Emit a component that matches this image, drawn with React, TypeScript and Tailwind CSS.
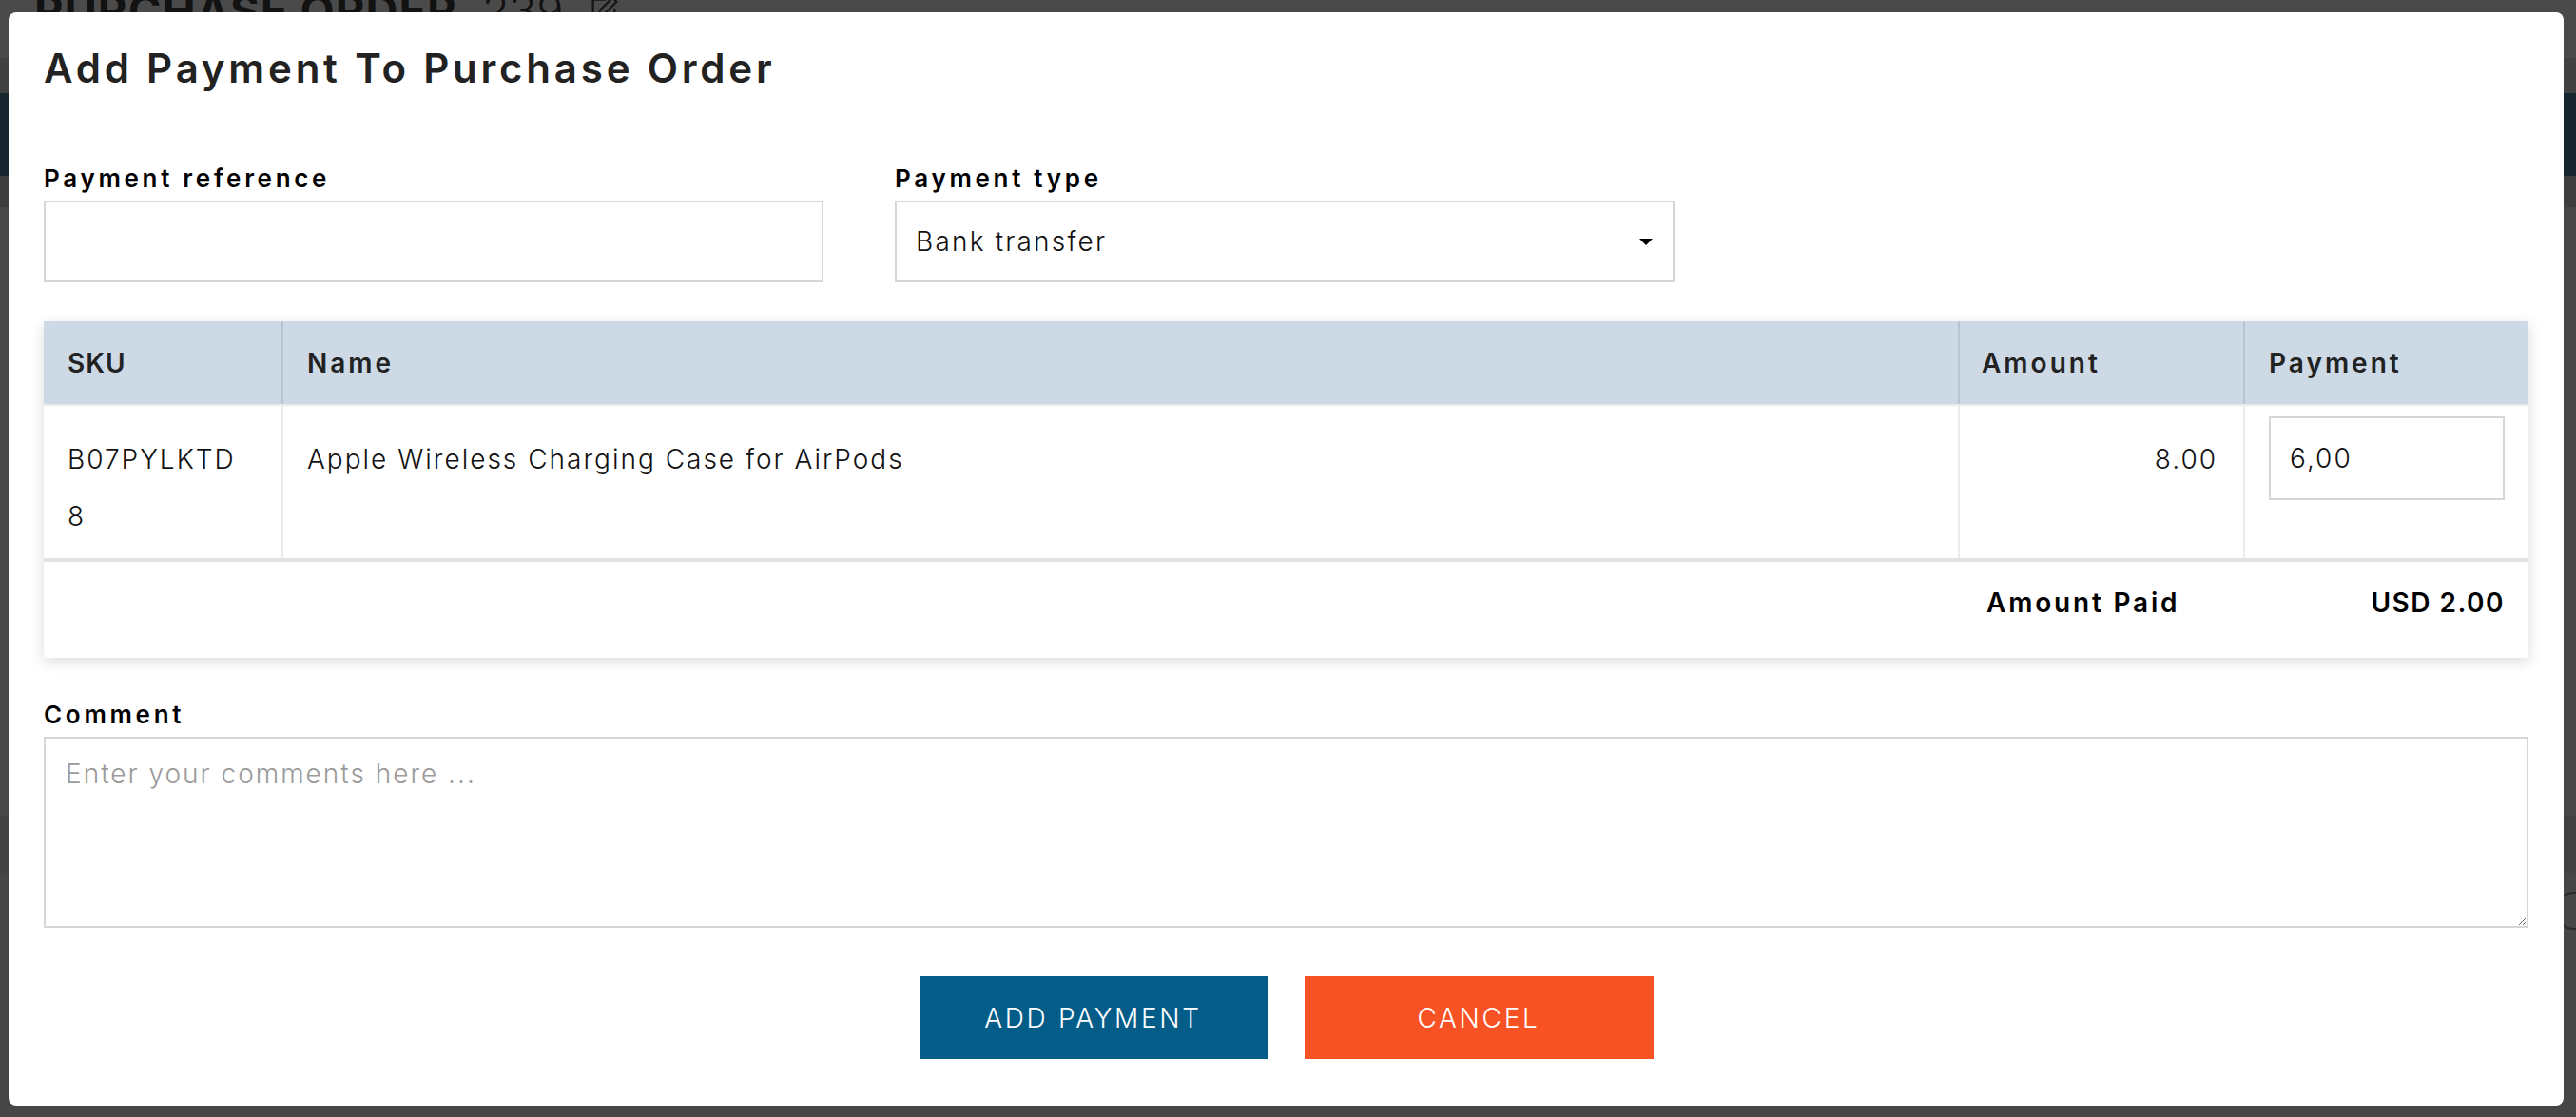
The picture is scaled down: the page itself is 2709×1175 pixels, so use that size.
import React from "react";

function EditIcon() {
  return (
    <svg width="34" height="34" viewBox="0 0 24 24" fill="none" stroke="#151515" strokeWidth="1.6" strokeLinecap="round" strokeLinejoin="round">
      <path d="M4 4h9" />
      <path d="M4 4v16h16v-9" />
      <path d="M18.5 2.5l3 3L12 15H9v-3z" />
    </svg>
  );
}

export default function App() {
  return (
    <div className="relative w-[2709px] h-[1175px] overflow-hidden bg-[#464646] font-[Inter,sans-serif]">
      {/* page behind the overlay */}
      <div className="h-[75px] bg-[#4a4a4a] pl-[36px]">
        <div className="-mt-[14px] flex items-center gap-[26px] text-[#121212]">
          <span className="text-[47px] leading-[50px] font-bold tracking-[1px]">PURCHASE ORDER</span>
          <span className="text-[47px] leading-[50px] font-light">239</span>
          <EditIcon />
        </div>
      </div>
      <div className="h-[37px] bg-[#414141]" />
      <div className="h-[87px] bg-[#18272f]" />
      <div className="h-[33px] bg-[#3e3e3e]" />
      <div className="h-[640px] bg-[#474747]" />
      <div className="h-[60px] bg-[#424242]" />
      <div className="h-[80px] bg-[#464646] flex justify-end items-center">
        <div className="w-[40px] h-[40px] rounded-full border-2 border-[#2a2a2a] -mr-[18px]" />
      </div>

      {/* modal */}
      <div className="absolute left-[9px] top-[13px] w-[2687px] h-[1150px] rounded-[8px] bg-white px-[37px] pt-[34px] text-[#222]">
        <h2 className="text-[42px] leading-[50px] font-semibold tracking-[3.8px] text-[#222]">Add Payment To Purchase Order</h2>

        <div className="mt-[76px] flex gap-[75px]">
          <div className="w-[820px]">
            <label className="block text-[26px] leading-[30px] font-semibold tracking-[3.7px] text-black">Payment reference</label>
            <input className="mt-[8px] block w-full h-[86px] border-2 border-[#d6d6d6] outline-none px-[20px] text-[28px] font-light" />
          </div>
          <div className="w-[820px]">
            <label className="block text-[26px] leading-[30px] font-semibold tracking-[3.7px] text-black">Payment type</label>
            <div className="mt-[8px] flex h-[86px] w-full items-center justify-between border-2 border-[#d6d6d6] pl-[20px] pr-[21px]">
              <span className="text-[28px] font-light tracking-[2.2px] text-[#111]">Bank transfer</span>
              <svg width="14" height="7" viewBox="0 0 14 7"><path d="M0 0h14L7 7z" fill="#000" /></svg>
            </div>
          </div>
        </div>

        {/* table */}
        <div className="mt-[41px] w-full bg-white shadow-[0_4px_14px_rgba(0,0,0,0.14)]">
          <div className="grid h-[87px] grid-cols-[250px_1763px_300px_300px] bg-[#cdd9e4] text-[28px] font-semibold tracking-[3px] text-[#222]">
            <div className="flex items-center pl-[25px] tracking-[1px]">SKU</div>
            <div className="flex items-center border-l-2 border-[#b8c5d1] pl-[25px]">Name</div>
            <div className="flex items-center border-l-2 border-[#b8c5d1] pl-[23px]">Amount</div>
            <div className="flex items-center border-l-2 border-[#b8c5d1] pl-[25px]">Payment</div>
          </div>
          <div className="h-[2px] bg-[#e8ebef]" />
          <div className="grid h-[160px] grid-cols-[250px_1763px_300px_300px] text-[28px] font-light leading-[60px] tracking-[2px] text-[#111]">
            <div className="pl-[25px] pt-[26px]">
              <div>B07PYLKTD</div>
              <div>8</div>
            </div>
            <div className="border-l-2 border-[#ececec] pl-[25px] pt-[26px]">Apple Wireless Charging Case for AirPods</div>
            <div className="border-l-2 border-[#ececec] pr-[27px] pt-[26px] text-right">8.00</div>
            <div className="border-l-2 border-[#ececec] pl-[25px] pt-[11px]">
              <input
                defaultValue="6,00"
                className="block h-[88px] w-[248px] border-2 border-[#d6d6d6] pl-[20px] text-[28px] font-light tracking-[2px] text-[#111] outline-none"
              />
            </div>
          </div>
          <div className="h-[4px] bg-[#e2e2e2]" />
          <div className="flex h-[101px] justify-end pt-[23px] text-[28px] font-semibold leading-[40px] tracking-[2.8px] text-black">
            <div className="w-[300px] pl-[30px]">Amount Paid</div>
            <div className="w-[300px] pr-[25px] text-right tracking-[1.5px]">USD 2.00</div>
          </div>
        </div>

        <label className="mt-[45px] block text-[26px] leading-[30px] font-semibold tracking-[3.7px] text-black">Comment</label>
        <textarea
          placeholder="Enter your comments here ..."
          className="mt-[8px] block h-[201px] w-full border-2 border-[#d6d6d6] px-[21px] pt-[17px] text-[28px] leading-[40px] font-light tracking-[2px] outline-none placeholder:text-[#9a9a9a]"
        />

        <div className="mt-[51px] flex justify-center gap-[39px]">
          <button className="h-[87px] w-[366px] bg-[#045d88] text-[28px] font-light uppercase tracking-[2.7px] text-white">ADD PAYMENT</button>
          <button className="h-[87px] w-[367px] bg-[#f75224] text-[28px] font-light uppercase tracking-[2.7px] text-white">CANCEL</button>
        </div>
      </div>
    </div>
  );
}
